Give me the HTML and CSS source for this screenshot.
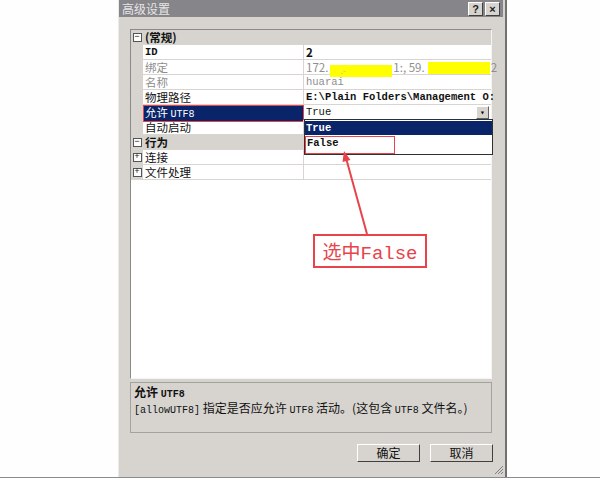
FILE: index.html
```html
<!DOCTYPE html>
<html lang="zh-CN">
<head>
  <meta charset="UTF-8">
  <title>高级设置</title>
  <link rel="stylesheet" href="styles.css">
</head>
<body>
<div class="dialog">
  <div class="titlebar">
    <span class="title">高级设置</span>
    <span class="tbtn">?</span>
    <span class="tbtn">×</span>
  </div>

  <div class="grid">
    <div class="row cat">
      <span class="margin"><i class="box">−</i></span>
      <span class="name">(常规)</span>
      <span class="value"></span>
    </div>
    <div class="row">
      <span class="margin"></span>
      <span class="name mono bold">ID</span>
      <span class="value bold">2</span>
    </div>
    <div class="row">
      <span class="margin"></span>
      <span class="name dim">绑定</span>
      <span class="value dim">172.<i class="mark m1">.-</i>1:, 59.<i class="mark m2"></i>2</span>
    </div>
    <div class="row">
      <span class="margin"></span>
      <span class="name dim">名称</span>
      <span class="value dim mono">huarai</span>
    </div>
    <div class="row">
      <span class="margin"></span>
      <span class="name">物理路径</span>
      <span class="value mono bold">E:\Plain Folders\Management O:</span>
    </div>
    <div class="row">
      <span class="margin"></span>
      <span class="name selected">允许 <b class="small">UTF8</b></span>
      <span class="value mono">True<i class="dropbtn">▾</i></span>
    </div>
    <div class="row">
      <span class="margin"></span>
      <span class="name">自动启动</span>
      <span class="value"></span>
    </div>
    <div class="row cat">
      <span class="margin"><i class="box">−</i></span>
      <span class="name">行为</span>
      <span class="value"></span>
    </div>
    <div class="row">
      <span class="margin"><i class="box">+</i></span>
      <span class="name">连接</span>
      <span class="value"></span>
    </div>
    <div class="row">
      <span class="margin"><i class="box">+</i></span>
      <span class="name">文件处理</span>
      <span class="value"></span>
    </div>

    <div class="droplist">
      <div class="item active">True</div>
      <div class="item"><span class="pick">False</span></div>
    </div>
  </div>

  <div class="desc">
    <div class="desc-title">允许 <span class="small">UTF8</span></div>
    <div class="desc-text"><span class="small">[allowUTF8]</span> 指定是否应允许 <span class="small">UTF8</span> 活动。(这包含 <span class="small">UTF8</span> 文件名。)</div>
  </div>

  <div class="actions">
    <button class="btn">确定</button>
    <button class="btn">取消</button>
  </div>

  <svg class="grip" width="10" height="10" viewBox="0 0 10 10">
    <path d="M9 1 L1 9 M9 4 L4 9 M9 7 L7 9" stroke="#808080" stroke-width="1"/>
  </svg>
</div>

<!-- annotation -->
<svg class="arrow" width="600" height="478" viewBox="0 0 600 478">
  <line x1="367" y1="234" x2="346" y2="158" stroke="#e8434a" stroke-width="2"/>
  <polygon points="344,151 350.5,160 342.5,162" fill="#e8434a"/>
</svg>
<div class="callout">选中<span class="en">False</span></div>
</body>
</html>
```

FILE: styles.css
```css
body {
  margin: 0;
  height: 477px;
  border-bottom: 1px solid #8c8c8c;
  background-color: #fefefe;
  font-family: "Noto Sans CJK SC", "Liberation Sans", sans-serif;
  font-size: 12px;
  color: #111;
  position: relative;
  overflow: hidden;
}

.dialog {
  position: relative;
  margin-left: 118px;
  width: 389px;
  height: 477px;
  box-sizing: border-box;
  border-left: 1px solid #ecebe8;
  border-right: 2px solid #707070;
  background-color: #d7d4cf;
  display: flex;
  flex-direction: column;
}

.titlebar {
  height: 17px;
  margin-right: 2px;
  background-color: #86858a;
  display: flex;
  align-items: center;
  gap: 2px;
  padding: 0 3px 0 3px;
}

.title {
  flex: 1;
  color: #e6e6e6;
  font-size: 12px;
  line-height: 14px;
}

.tbtn {
  width: 13px;
  height: 12px;
  background-color: #d7d4cf;
  border: 1px solid;
  border-color: #fff #404040 #404040 #fff;
  font-family: "Liberation Sans", sans-serif;
  font-weight: bold;
  font-size: 11px;
  line-height: 12px;
  text-align: center;
  color: #222;
}

/* property grid */
.grid {
  position: relative;
  margin: 12px 13px 0 11px;
  height: 350px;
  box-sizing: border-box;
  border: 1px solid #8a8a8a;
  border-right-color: #f4f4f4;
  border-bottom-color: #f4f4f4;
  background-color: #fff;
}

.row {
  display: grid;
  grid-template-columns: 12px 161px 1fr;
  height: 15px;
  box-sizing: border-box;
  border-bottom: 1px solid #d8d5d0;
  font-size: 11.5px;
  line-height: 14px;
}

.row .margin {
  background-color: #d7d4cf;
  display: flex;
  align-items: center;
  justify-content: center;
}

.row .name {
  padding-left: 2px;
  border-right: 1px solid #d8d5d0;
  white-space: nowrap;
}

.row .value {
  position: relative;
  padding-left: 2px;
  white-space: nowrap;
  overflow-x: clip;
}

.row.cat {
  background-color: #d7d4cf;
  font-weight: bold;
}

.row.cat .name {
  border-right: none;
}

.box {
  width: 7px;
  height: 7px;
  border: 1px solid #555;
  background-color: #fff;
  font-style: normal;
  font-weight: normal;
  font-family: "Liberation Mono", monospace;
  font-size: 9px;
  line-height: 7px;
  text-align: center;
  color: #111;
}

.mono {
  font-family: "Liberation Mono", "Noto Sans CJK SC", monospace;
  font-size: 10.5px;
}

.bold {
  font-weight: bold;
}

.dim {
  color: #8e8e8e;
}

.mark {
  display: inline-block;
  height: 12px;
  vertical-align: -2px;
  background-color: #ffff00;
  color: #c8c8a0;
  font-style: normal;
  font-size: 9px;
  line-height: 12px;
}

.mark.m1 {
  width: 62px;
  margin: 0 1px 0 2px;
  text-indent: 10px;
}

.mark.m2 {
  width: 62px;
  margin: 0 1px 0 3px;
}

.selected {
  background-color: #0a246a;
  color: #fff;
  outline: 1px solid #e8434a;
  outline-offset: -1px;
}

.small {
  font-family: "Liberation Mono", monospace;
  font-size: 10px;
  font-weight: bold;
}

.selected .small {
  font-weight: normal;
}

.dropbtn {
  position: absolute;
  right: 2px;
  top: 1px;
  width: 11px;
  height: 11px;
  background-color: #d7d4cf;
  border: 1px solid;
  border-color: #fff #606060 #606060 #fff;
  font-style: normal;
  font-size: 8px;
  line-height: 11px;
  text-align: center;
  color: #000;
}

.droplist {
  position: absolute;
  left: 173px;
  top: 89px;
  width: 189px;
  height: 36px;
  box-sizing: border-box;
  border: 1px solid #303030;
  background-color: #fff;
  padding-top: 1px;
  font-family: "Liberation Mono", monospace;
  font-size: 10.5px;
  font-weight: bold;
}

.item {
  height: 14px;
  line-height: 14px;
  padding-left: 1px;
}

.item.active {
  background-color: #0a246a;
  color: #fff;
}

.pick {
  display: inline-block;
  width: 87px;
  height: 16px;
  margin-top: 1px;
  margin-left: -1px;
  border: 1px solid #e8434a;
  line-height: 12px;
  padding-left: 1px;
}

/* description */
.desc {
  margin: 3px 13px 0 11px;
  height: 51px;
  box-sizing: border-box;
  border: 1px solid #a4a29e;
  padding: 2px 3px;
  line-height: 13px;
}

.desc-title {
  font-weight: bold;
}

.desc-text .small {
  font-weight: normal;
}

.actions {
  display: flex;
  justify-content: flex-end;
  gap: 10px;
  margin-top: 11px;
  padding-right: 12px;
}

.btn {
  width: 63px;
  height: 18px;
  padding: 0;
  background-color: #d7d4cf;
  border: 1px solid;
  border-color: #fff #404040 #404040 #fff;
  font-family: "Noto Sans CJK SC", sans-serif;
  font-size: 12px;
  line-height: 14px;
  color: #111;
}

.grip {
  position: absolute;
  right: 1px;
  bottom: 2px;
}

/* annotation */
.arrow {
  position: absolute;
  left: 0;
  top: 0;
  pointer-events: none;
}

.callout {
  position: absolute;
  left: 313px;
  top: 234px;
  width: 114px;
  height: 34px;
  box-sizing: border-box;
  border: 2px solid #e8434a;
  background-color: #fff;
  color: #e8434a;
  font-family: "Noto Sans CJK SC", serif;
  font-size: 19px;
  line-height: 30px;
  text-align: center;
}

.callout .en {
  font-family: "Liberation Mono", monospace;
}
```
